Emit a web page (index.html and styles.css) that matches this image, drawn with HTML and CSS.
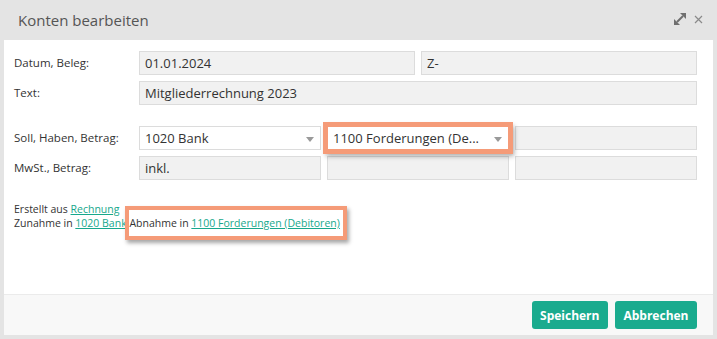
FILE: index.html
```html
<!DOCTYPE html>
<html lang="de">
<head>
  <meta charset="UTF-8">
  <meta name="viewport" content="width=device-width, initial-scale=1.0">
  <title>Konten bearbeiten</title>
  <link rel="stylesheet" href="styles.css">
</head>
<body>
  <div class="dialog">
    <div class="dialog-header">
      <span class="dialog-title">Konten bearbeiten</span>
      <div class="dialog-tools">
        <svg class="icon-expand" width="14" height="14" viewBox="0 0 14 14">
          <path d="M4 10 L10 4" stroke="#6f6f6f" stroke-width="2"/>
          <polygon points="13,1 13,7 7,1" fill="#6f6f6f"/>
          <polygon points="1,13 1,7 7,13" fill="#6f6f6f"/>
        </svg>
        <svg class="icon-close" width="9" height="9" viewBox="0 0 9 9">
          <path d="M1 1 L8 8 M8 1 L1 8" stroke="#8a8a8a" stroke-width="1.2"/>
        </svg>
      </div>
    </div>

    <div class="dialog-body">
      <div class="form-row">
        <label>Datum, Beleg:</label>
        <div class="fields cols-2">
          <input type="text" value="01.01.2024" readonly>
          <input type="text" value="Z-" readonly>
        </div>
      </div>
      <div class="form-row">
        <label>Text:</label>
        <div class="fields">
          <input type="text" value="Mitgliederrechnung 2023" readonly>
        </div>
      </div>
      <div class="form-row row-gap">
        <label>Soll, Haben, Betrag:</label>
        <div class="fields cols-3">
          <div class="select"><span class="select-text">1020 Bank</span><span class="caret"></span></div>
          <div class="select highlight"><span class="select-text">1100 Forderungen (De...</span><span class="caret"></span></div>
          <input type="text" value="" readonly>
        </div>
      </div>
      <div class="form-row">
        <label>MwSt., Betrag:</label>
        <div class="fields cols-3">
          <input type="text" value="inkl." readonly>
          <input type="text" value="" readonly>
          <input type="text" value="" readonly>
        </div>
      </div>

      <div class="info">
        Erstellt aus <a href="#">Rechnung</a><br>
        Zunahme in <a href="#">1020 Bank</a> <span class="marked">Abnahme in <a href="#">1100 Forderungen (Debitoren)</a></span>
      </div>
    </div>

    <div class="dialog-footer">
      <button>Speichern</button>
      <button>Abbrechen</button>
    </div>
  </div>
</body>
</html>
```

FILE: styles.css
```css
body {
  margin: 0;
  font-family: "Open Sans", Arial, sans-serif;
  color: #333;
}
.dialog {
  width: 717px;
  height: 339px;
  background-color: #e4e4e4;
  padding: 0 4px 4px;
  box-sizing: border-box;
}
.dialog-header {
  height: 40px;
  display: flex;
  align-items: center;
  justify-content: space-between;
  padding: 0 10px 0 14px;
}
.dialog-title {
  font-size: 15px;
  color: #555;
}
.dialog-tools {
  display: flex;
  align-items: center;
  gap: 7px;
  margin-top: -3px;
}
.icon-close {
  margin-top: 1px;
}
.dialog-body {
  height: 254px;
  box-sizing: border-box;
  background-color: #fff;
  padding: 11px 16px 0 10px;
}
.form-row {
  display: flex;
  align-items: center;
  margin-bottom: 6px;
}
.form-row.row-gap {
  margin-top: 21px;
}
label {
  width: 125px;
  font-size: 11.5px;
  margin-top: -1px;
}
.fields {
  flex: 1;
  display: grid;
  grid-template-columns: 1fr;
  gap: 6px;
}
.fields.cols-2 {
  grid-template-columns: 1fr 1fr;
}
.fields.cols-3 {
  grid-template-columns: 1fr 1fr 1fr;
}
input {
  width: 100%;
  height: 24px;
  box-sizing: border-box;
  border: 1px solid #dcdcdc;
  background-color: #f1f1f1;
  padding: 0 5px;
  font-family: "Open Sans", Arial, sans-serif;
  font-size: 13px;
  color: #333;
  outline: none;
}
.select {
  height: 24px;
  box-sizing: border-box;
  border: 1px solid #dcdcdc;
  background-color: #fff;
  padding: 0 24px 0 5px;
  display: flex;
  align-items: center;
  position: relative;
  font-size: 13px;
  min-width: 0;
}
.select-text {
  white-space: nowrap;
}
.caret {
  position: absolute;
  right: 6px;
  top: 10px;
  border-left: 4px solid transparent;
  border-right: 4px solid transparent;
  border-top: 5px solid #9a9a9a;
}
.select.highlight {
  border-color: #f59b78;
  outline: 4px solid #f59b78;
  outline-offset: 0;
  box-shadow: 2px 3px 5px 3px rgba(0, 0, 0, 0.35);
}
.info {
  margin-top: 22px;
  font-size: 10.5px;
  line-height: 14px;
}
.info a {
  color: #17a88c;
}
.marked {
  position: relative;
}
.marked::after {
  content: "";
  position: absolute;
  left: -4px;
  right: -7px;
  top: -10px;
  bottom: -10px;
  border: 4px solid #f59b78;
  box-shadow: 2px 3px 4px rgba(0, 0, 0, 0.35);
}
.dialog-footer {
  height: 41px;
  box-sizing: border-box;
  border-top: 1px solid #ebebeb;
  background-color: #f8f8f8;
  padding: 6px 16px 0;
  display: flex;
  justify-content: flex-end;
  align-items: flex-start;
  gap: 7px;
}
button {
  height: 28px;
  padding: 0 8.5px;
  background-color: #1aab8e;
  color: #fff;
  border: none;
  border-radius: 3px;
  font-family: "Open Sans", Arial, sans-serif;
  font-size: 12px;
  font-weight: bold;
  cursor: pointer;
}
```
